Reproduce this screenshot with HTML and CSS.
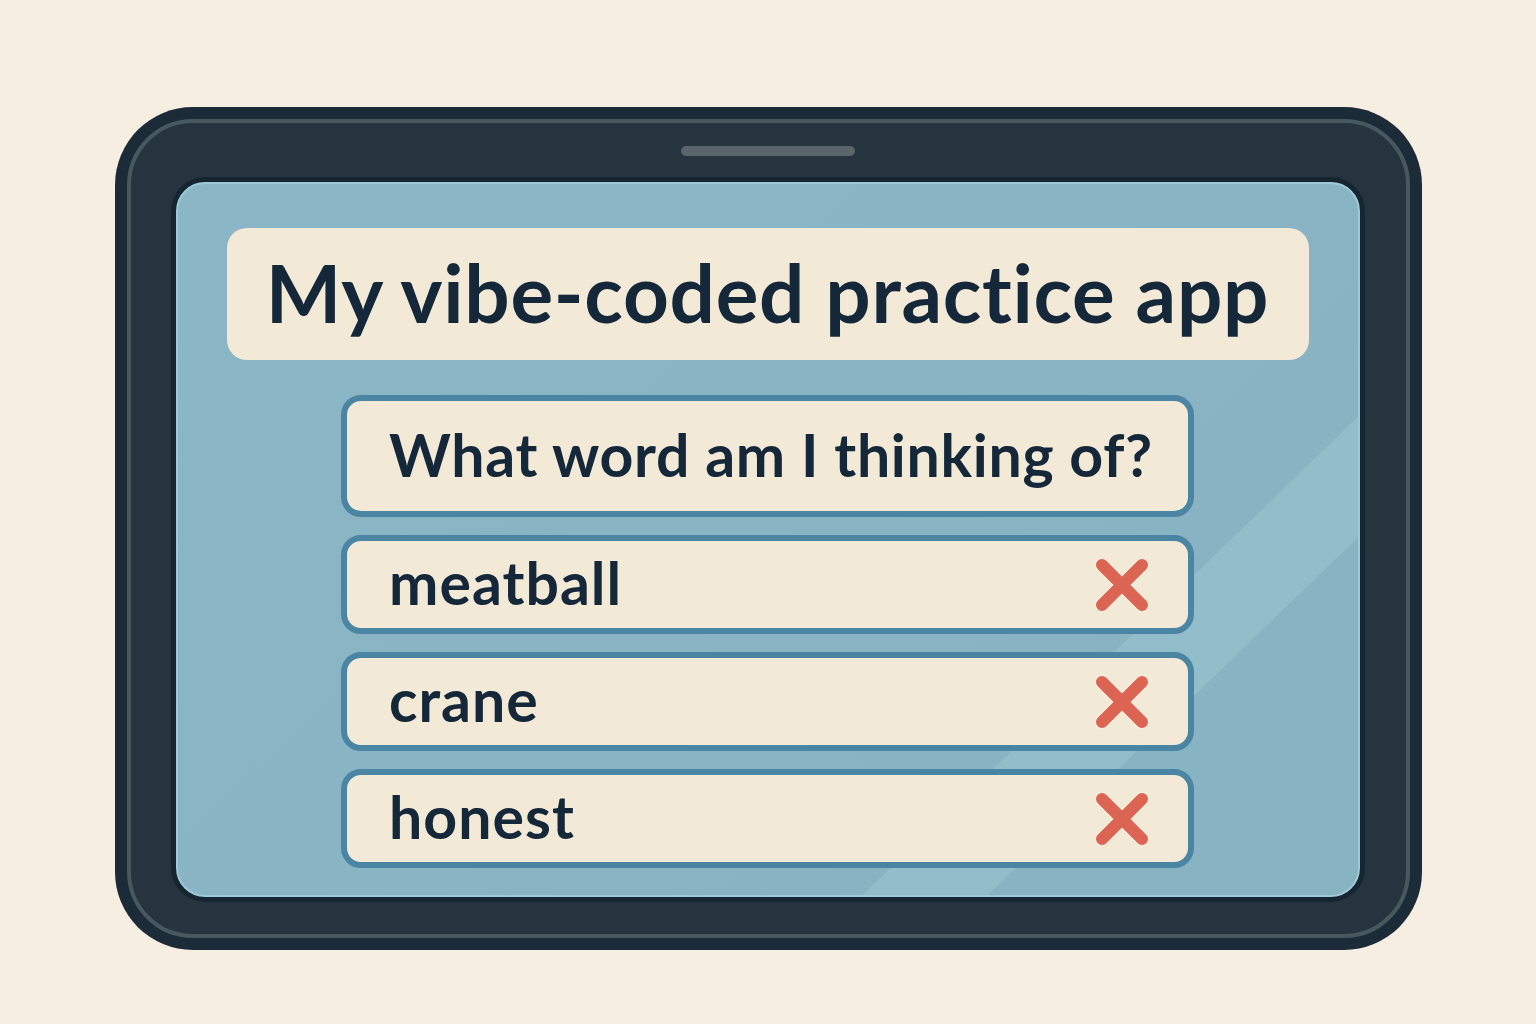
FILE: index.html
```html
<!DOCTYPE html>
<html lang="en">
<head>
<meta charset="utf-8">
<title>My vibe-coded practice app</title>
<link rel="stylesheet" href="styles.css">
</head>
<body>
<div class="tablet">
  <div class="bezel">
    <div class="notch"></div>
    <div class="screen">
      <div class="title-card"><h1 class="title">My vibe-coded practice app</h1></div>
      <div class="cards">
        <div class="card question"><span class="label">What word am I thinking of?</span></div>
        <div class="card answer"><span class="label">meatball</span>
          <svg class="cross" viewBox="0 0 56 56"><path d="M8 8L48 48M48 8L8 48" stroke="#f7ecdc" stroke-width="15" stroke-linecap="round"/><path d="M8 8L48 48M48 8L8 48" stroke="#dc6453" stroke-width="12" stroke-linecap="round"/></svg>
        </div>
        <div class="card answer"><span class="label">crane</span>
          <svg class="cross" viewBox="0 0 56 56"><path d="M8 8L48 48M48 8L8 48" stroke="#f7ecdc" stroke-width="15" stroke-linecap="round"/><path d="M8 8L48 48M48 8L8 48" stroke="#dc6453" stroke-width="12" stroke-linecap="round"/></svg>
        </div>
        <div class="card answer"><span class="label">honest</span>
          <svg class="cross" viewBox="0 0 56 56"><path d="M8 8L48 48M48 8L8 48" stroke="#f7ecdc" stroke-width="15" stroke-linecap="round"/><path d="M8 8L48 48M48 8L8 48" stroke="#dc6453" stroke-width="12" stroke-linecap="round"/></svg>
        </div>
      </div>
    </div>
  </div>
</div>
</body>
</html>
```
FILE: styles.css
```css
* { box-sizing: border-box; }
html, body { margin: 0; padding: 0; }
body {
  background: #f6eee0;
  width: 1536px;
  height: 1024px;
  overflow: hidden;
  font-family: "Lato", "Noto Sans", sans-serif;
  font-variant-ligatures: none;
  color: #14283a;
}
.tablet {
  width: 1307px;
  height: 843px;
  margin: 107px auto 0;
  padding: 12px;
  background: #1b2b37;
  border-radius: 78px;
}
.bezel {
  height: 100%;
  border: 4px solid #48585f;
  border-radius: 66px;
  background: #25343e;
  padding: 23px 41px 32px 40px;
  display: flex;
  flex-direction: column;
}
.notch {
  width: 174px;
  height: 10px;
  border-radius: 5px;
  background: #5a656b;
  margin: 0 auto;
}
.screen {
  flex: 1;
  margin-top: 21px;
  border: 5px solid #152531;
  border-radius: 34px;
  background: linear-gradient(136deg, #8ab6c5 0%, #87b3c2 74%, #92bdca 74.1%, #92bdca 80.5%, #87b3c2 80.6%, #87b3c2 100%);
  box-shadow: inset 0 0 0 2px #9ecad7;
  padding: 46px 51px 0;
  display: flex;
  flex-direction: column;
  align-items: center;
}
.title-card {
  width: 100%;
  height: 132px;
  background: #f2e9d7;
  border-radius: 20px;
  display: flex;
  align-items: center;
  justify-content: center;
}
.title {
  margin: 0;
  font-size: 80px;
  font-weight: 700;
  line-height: 1;
  letter-spacing: 0.7px;
  white-space: nowrap;
  padding-bottom: 4px;
}
.cards {
  width: 853px;
  margin-top: 35px;
  display: flex;
  flex-direction: column;
  gap: 18px;
}
.card {
  background: #f2e9d7;
  border: 6px solid #4a86a3;
  border-radius: 20px;
  display: flex;
  align-items: center;
  justify-content: space-between;
  padding: 0 38px 0 42px;
}
.question { height: 122px; }
.question .label { letter-spacing: 0.7px; }
.answer { height: 99px; }
.label {
  font-size: 59px;
  font-weight: 700;
  line-height: 1;
  letter-spacing: 1px;
  white-space: nowrap;
  padding-bottom: 4px;
}
.cross {
  flex: none;
  width: 56px;
  height: 56px;
}
```
